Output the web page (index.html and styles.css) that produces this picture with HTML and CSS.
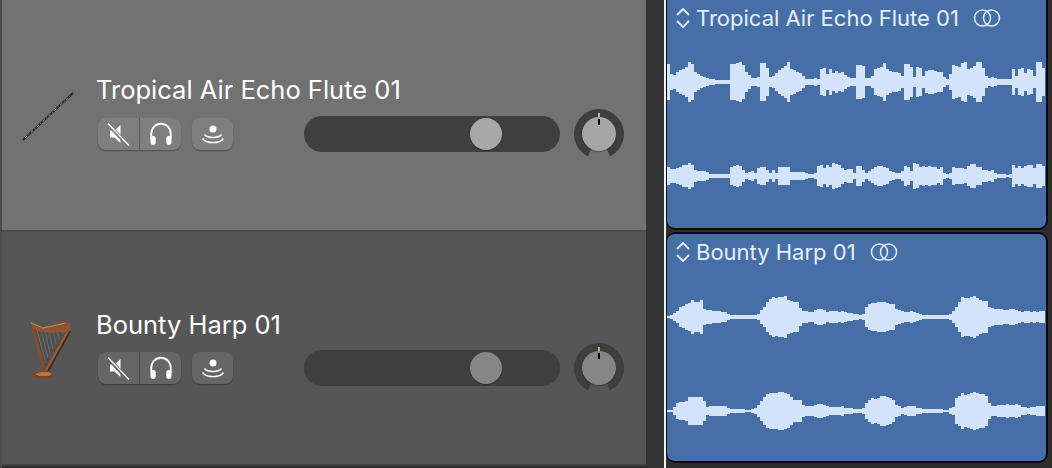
FILE: index.html
```html
<!DOCTYPE html>
<html lang="en">
<head>
<meta charset="utf-8">
<title>Tracks</title>
<link rel="stylesheet" href="styles.css">
</head>
<body>
<svg class="defs" width="0" height="0" aria-hidden="true">
  <symbol id="i-mute" viewBox="0 0 24 24">
    <path d="M3 8.500h4.500L13.500 3v18l-6-5.500H3z" fill="#fff"/>
    <path d="M1.500 2.500L21 23.500" stroke="currentColor" stroke-width="4" fill="none"/>
    <path d="M1 1.500L22 23.500" stroke="#fff" stroke-width="1.300" fill="none"/>
  </symbol>
  <symbol id="i-phones" viewBox="0 0 24 24">
    <path d="M2.300 16.500V11.500a9.700 9.700 0 0 1 19.400 0v5" fill="none" stroke="#fff" stroke-width="1.900"/>
    <rect x="1.500" y="14" width="5.200" height="9" rx="2.400" fill="#fff"/>
    <rect x="17.300" y="14" width="5.200" height="9" rx="2.400" fill="#fff"/>
  </symbol>
  <symbol id="i-cast" viewBox="0 0 24 24">
    <circle cx="12" cy="7" r="3.500" fill="#fff"/>
    <path d="M3.500 12.500c3 4 14 4 17 0M1.500 16.500c4 5.500 17 5.500 21 0" fill="none" stroke="#fff" stroke-width="1.400"/>
  </symbol>
  <symbol id="i-sort" viewBox="0 0 16 22">
    <path d="M2 8l6-6 6 6M2 14l6 6 6-6" fill="none" stroke="#e6eefb" stroke-width="1.800"/>
  </symbol>
  <symbol id="i-link" viewBox="0 0 28 18">
    <circle cx="9.500" cy="9" r="8" fill="none" stroke="#e6eefb" stroke-width="1.500"/>
    <circle cx="18.500" cy="9" r="8" fill="none" stroke="#e6eefb" stroke-width="1.500"/>
  </symbol>
  <symbol id="i-knob" viewBox="0 0 50 50">
    <path d="M14 47.500A25 25 0 1 1 36 47.500L32 38H18z" fill="#3e3e3e"/>
  </symbol>
</svg>

<main class="app">
  <section class="tracks">
    <article class="track track-a">
      <div class="instrument">
        <svg class="flute" viewBox="0 0 52 50" aria-hidden="true">
          <path d="M1 49L51 2" stroke="#2a2a2a" stroke-width="2.200" fill="none"/>
          <path d="M3 47L49 4" stroke="#b9b9b9" stroke-width=".8" stroke-dasharray="3 2 1 2" fill="none"/>
        </svg>
      </div>
      <div class="body">
        <h2 class="name">Tropical Air Echo Flute 01</h2>
        <div class="controls">
          <div class="btn-group">
            <button class="btn"><svg class="ico"><use href="#i-mute"/></svg></button>
            <button class="btn"><svg class="ico"><use href="#i-phones"/></svg></button>
          </div>
          <button class="btn btn-solo"><svg class="ico"><use href="#i-cast"/></svg></button>
          <div class="slider"><span class="thumb"></span></div>
          <div class="pan"><svg class="ring"><use href="#i-knob"/></svg><span class="led"></span><span class="cap"></span><span class="tick"></span></div>
        </div>
      </div>
    </article>
    <article class="track track-b">
      <div class="instrument">
        <svg class="harp" viewBox="0 0 42 60" aria-hidden="true">
          <path d="M3 8L15 51 38 11z" fill="#4e4e4e"/>
          <path d="M7 9l9 33M11 9l7 28M15 10l5 23M19 10l4 18M23 9l3 14M27 8l2 10M31 7l2 6" stroke="#7a7a7a" stroke-width=".7" fill="none"/>
          <path d="M40 10L17 52" stroke="#3a2a20" stroke-width="2" fill="none"/>
          <path d="M38 10L15 51" stroke="#9a5a32" stroke-width="2.400" fill="none"/>
          <path d="M2 3l13 48" stroke="#8a4c28" stroke-width="2.600" fill="none"/>
          <path d="M0 1l13 5 10-2 12-3 5 1 1 6-3 3-8 0-8 1-10-1-9-3z" fill="#8f5532"/>
          <path d="M1 2l12 5 10-2 12-3" stroke="#c08a5e" stroke-width="1" fill="none"/>
          <path d="M2 53l10-3h8l3 3-2 4H9l-6-1z" fill="#7a4020"/>
          <path d="M11 51h8l3 2-3 2H9l-4-2z" fill="#b87446"/>
        </svg>
      </div>
      <div class="body">
        <h2 class="name">Bounty Harp 01</h2>
        <div class="controls">
          <div class="btn-group">
            <button class="btn"><svg class="ico"><use href="#i-mute"/></svg></button>
            <button class="btn"><svg class="ico"><use href="#i-phones"/></svg></button>
          </div>
          <button class="btn btn-solo"><svg class="ico"><use href="#i-cast"/></svg></button>
          <div class="slider"><span class="thumb"></span></div>
          <div class="pan"><svg class="ring"><use href="#i-knob"/></svg><span class="led"></span><span class="cap"></span><span class="tick"></span></div>
        </div>
      </div>
    </article>
  </section>
  <div class="gutter"></div>
  <div class="rule"></div>
  <section class="clips">
    <article class="clip clip-a">
      <header class="clip-head">
        <svg class="sort"><use href="#i-sort"/></svg>
        <span class="clip-name">Tropical Air Echo Flute 01</span>
        <svg class="link"><use href="#i-link"/></svg>
      </header>
      <div class="waves">
        <svg class="wave" viewBox="-.5 -22 126 44" preserveAspectRatio="none" aria-hidden="true"><path d="M0-18V18M1-8V8M2-7V7M3-10V10M4-12V12M5-13V13M6-15V15M7-20V20M8-18V18M9-10V10M10-8V8M11-6V6M12-5V5M13-4V4M14-3V3M15-3V3M16-2V2M17-2V2M18-2V2M19-2V2M20-2V2M21-18V18M22-18V18M23-19V19M24-20V20M25-17V17M26-10V10M27-7V7M28-4V4M29-4V4M30-5V5M31-19V19M32-19V19M33-14V14M34-5V5M35-6V6M36-9V9M37-12V12M38-14V14M39-16V16M40-20V20M41-13V13M42-12V12M43-10V10M44-9V9M45-6V6M46-3V3M47-3V3M48-3V3M49-4V4M50-3V3M51-13V13M52-14V14M53-8V8M54-13V13M55-9V9M56-11V11M57-9V9M58-10V10M59-7V7M60-5V5M61-4V4M62-4V4M63-17V17M64-17V17M65-16V16M66-4V4M67-4V4M68-6V6M69-13V13M70-14V14M71-15V15M72-19V19M73-13V13M74-11V11M75-10V10M76-10V10M77-9V9M78-6V6M79-18V18M80-18V18M81-15V15M82-5V5M83-15V15M84-14V14M85-6V6M86-11V11M87-12V12M88-12V12M89-11V11M90-10V10M91-10V10M92-5V5M93-3V3M94-8V8M95-17V17M96-16V16M97-15V15M98-19V19M99-20V20M100-13V13M101-14V14M102-16V16M103-20V20M104-20V20M105-14V14M106-6V6M107-4V4M108-5V5M109-4V4M110-3V3M111-3V3M112-3V3M113-3V3M114-3V3M115-13V13M116-6V6M117-13V13M118-14V14M119-9V9M120-13V13M121-12V12M122-6V6M123-20V20M124-20V20M125-14V14"/></svg>
        <svg class="wave" viewBox="-.5 -22 126 44" preserveAspectRatio="none" aria-hidden="true"><path d="M0-9V9M1-7V7M2-7V7M3-8V8M4-9V9M5-11V11M6-11V11M7-13V13M8-11V11M9-6V6M10-5V5M11-5V5M12-5V5M13-4V4M14-2V2M15-2V2M16-2V2M17-2V2M18-2V2M19-2V2M20-2V2M21-9V9M22-10V10M23-11V11M24-10V10M25-6V6M26-3V3M27-4V4M28-5V5M29-3V3M30-8V8M31-9V9M32-9V9M33-6V6M34-3V3M35-6V6M36-3V3M37-9V9M38-9V9M39-9V9M40-9V9M41-4V4M42-4V4M43-4V4M44-4V4M45-4V4M46-3V3M47-2V2M48-2V2M49-3V3M50-10V10M51-11V11M52-8V8M53-11V11M54-9V9M55-13V13M56-12V12M57-11V11M58-8V8M59-6V6M60-7V7M61-7V7M62-3V3M63-10V10M64-10V10M65-6V6M66-3V3M67-5V5M68-7V7M69-9V9M70-10V10M71-10V10M72-9V9M73-8V8M74-5V5M75-4V4M76-3V3M77-3V3M78-5V5M79-10V10M80-9V9M81-5V5M82-13V13M83-12V12M84-9V9M85-10V10M86-9V9M87-10V10M88-9V9M89-9V9M90-7V7M91-9V9M92-3V3M93-2V2M94-3V3M95-9V9M96-8V8M97-8V8M98-8V8M99-7V7M100-10V10M101-12V12M102-12V12M103-9V9M104-9V9M105-6V6M106-6V6M107-5V5M108-6V6M109-3V3M110-2V2M111-2V2M112-2V2M113-1V1M114-2V2M115-11V11M116-8V8M117-10V10M118-8V8M119-10V10M120-11V11M121-11V11M122-8V8M123-12V12M124-12V12M125-10V10"/></svg>
      </div>
    </article>
    <article class="clip clip-b">
      <header class="clip-head">
        <svg class="sort"><use href="#i-sort"/></svg>
        <span class="clip-name">Bounty Harp 01</span>
        <svg class="link"><use href="#i-link"/></svg>
      </header>
      <div class="waves">
        <svg class="wave" viewBox="-.5 -22 126 44" preserveAspectRatio="none" aria-hidden="true"><path d="M0-1V1M1-2V2M2-4V4M3-6V6M4-10V10M5-11V11M6-13V13M7-14V14M8-17V17M9-15V15M10-15V15M11-17V17M12-8V8M13-7V7M14-7V7M15-6V6M16-6V6M17-6V6M18-5V5M19-5V5M20-3V3M21-2V2M22-2V2M23-2V2M24-2V2M25-2V2M26-2V2M27-2V2M28-2V2M29-2V2M30-3V3M31-7V7M32-10V10M33-15V15M34-18V18M35-20V20M36-19V19M37-20V20M38-20V20M39-21V21M40-17V17M41-16V16M42-15V15M43-15V15M44-9V9M45-6V6M46-6V6M47-5V5M48-5V5M49-7V7M50-8V8M51-8V8M52-7V7M53-5V5M54-6V6M55-6V6M56-6V6M57-5V5M58-6V6M59-5V5M60-4V4M61-4V4M62-3V3M63-3V3M64-2V2M65-3V3M66-10V10M67-13V13M68-14V14M69-14V14M70-15V15M71-15V15M72-15V15M73-14V14M74-13V13M75-13V13M76-8V8M77-7V7M78-6V6M79-5V5M80-5V5M81-6V6M82-5V5M83-4V4M84-3V3M85-2V2M86-2V2M87-2V2M88-2V2M89-2V2M90-2V2M91-2V2M92-2V2M93-2V2M94-3V3M95-6V6M96-10V10M97-15V15M98-20V20M99-19V19M100-19V19M101-20V20M102-21V21M103-19V19M104-17V17M105-16V16M106-16V16M107-10V10M108-9V9M109-8V8M110-8V8M111-8V8M112-7V7M113-7V7M114-8V8M115-8V8M116-7V7M117-6V6M118-5V5M119-6V6M120-6V6M121-5V5M122-6V6M123-5V5M124-6V6M125-6V6"/></svg>
        <svg class="wave" viewBox="-.5 -22 126 44" preserveAspectRatio="none" aria-hidden="true"><path d="M0-1V1M1-1V1M2-4V4M3-8V8M4-9V9M5-9V9M6-10V10M7-14V14M8-14V14M9-14V14M10-14V14M11-14V14M12-10V10M13-4V4M14-5V5M15-5V5M16-5V5M17-5V5M18-5V5M19-5V5M20-3V3M21-2V2M22-2V2M23-2V2M24-2V2M25-2V2M26-1V1M27-1V1M28-2V2M29-3V3M30-6V6M31-10V10M32-14V14M33-17V17M34-18V18M35-18V18M36-18V18M37-19V19M38-19V19M39-18V18M40-17V17M41-14V14M42-11V11M43-11V11M44-11V11M45-6V6M46-5V5M47-5V5M48-5V5M49-6V6M50-7V7M51-7V7M52-6V6M53-5V5M54-4V4M55-4V4M56-4V4M57-4V4M58-5V5M59-3V3M60-3V3M61-3V3M62-2V2M63-2V2M64-2V2M65-3V3M66-8V8M67-11V11M68-13V13M69-12V12M70-13V13M71-15V15M72-15V15M73-14V14M74-13V13M75-11V11M76-6V6M77-5V5M78-3V3M79-4V4M80-5V5M81-5V5M82-5V5M83-3V3M84-3V3M85-2V2M86-2V2M87-2V2M88-2V2M89-2V2M90-2V2M91-2V2M92-1V1M93-1V1M94-3V3M95-4V4M96-13V13M97-15V15M98-18V18M99-16V16M100-17V17M101-18V18M102-19V19M103-18V18M104-17V17M105-17V17M106-15V15M107-8V8M108-5V5M109-5V5M110-6V6M111-6V6M112-6V6M113-7V7M114-6V6M115-6V6M116-7V7M117-6V6M118-4V4M119-4V4M120-3V3M121-4V4M122-4V4M123-5V5M124-5V5M125-5V5"/></svg>
      </div>
    </article>
  </section>
</main>
</body>
</html>
```

FILE: styles.css
```css
* { box-sizing: border-box; margin: 0; padding: 0; }
html, body { width: 1052px; height: 468px; overflow: hidden; background: #2e2e2e; }
body { font-family: Inter, "Liberation Sans", sans-serif; color: #fff; }
.defs { display: block; height: 0; }

.app { display: flex; width: 1052px; height: 468px; }

.tracks { width: 646px; flex: none; display: flex; flex-direction: column; border-left: 2px solid #4a4a4a; }
.track { display: flex; flex: none; }
.track-a { height: 232px; padding-top: 76px; background: #727272; border-bottom: 2px solid #4b4b4b; }
.track-b { height: 234px; padding-top: 79px; background: #565656; border-bottom: 2px solid #424242; }

.instrument { width: 95px; flex: none; display: flex; justify-content: flex-start; align-items: flex-start; }
.flute { width: 52px; height: 50px; margin: 15px 0 0 20px; }
.harp { width: 42px; height: 60px; margin: 10px 0 0 28px; }

.body { flex: none; width: 530px; }
.name { font-size: 25.500px; line-height: 28px; font-weight: 400; color: #fff; margin: 0 0 5px -1px; }
.track-b .name { margin-bottom: 4px; }
.controls { display: flex; align-items: center; margin-left: 1px; }

.btn { width: 41px; height: 32px; border: 0; display: flex; align-items: center; justify-content: center; background: #7f7f7f; color: #7f7f7f; }
.btn-group { display: flex; gap: 1px; width: 83px; border-radius: 8px; overflow: hidden; background: #5c5c5c; box-shadow: 0 1px 1px rgba(0,0,0,.3); }
.btn-solo { width: 41px; margin-left: 11px; border-radius: 8px; box-shadow: 0 1px 1px rgba(0,0,0,.3); }
.track-b .btn { background: #666; color: #666; }
.track-b .btn-group { background: #484848; }
.ico { width: 24px; height: 24px; }

.slider { width: 256px; height: 36px; margin-left: 71px; border-radius: 18px; background: #3f3f3f; display: flex; align-items: center; padding-left: 166px; }
.thumb { width: 32px; height: 32px; border-radius: 50%; background: #a8a8a8; box-shadow: 0 1px 1px rgba(0,0,0,.3); }
.track-b .thumb { background: #868686; }

.pan { position: relative; width: 50px; height: 50px; margin-left: 14px; }
.ring { display: block; width: 50px; height: 50px; }
.cap { position: absolute; left: 8px; top: 8px; width: 34px; height: 34px; border-radius: 50%; background: #a6a6a6; box-shadow: 0 1px 1px rgba(0,0,0,.3); }
.track-b .cap { background: #868686; }
.led { position: absolute; left: 24px; top: 4px; width: 2px; height: 4px; background: #6fdc6f; }
.tick { position: absolute; left: 24px; top: 10px; width: 2px; height: 6px; background: #000; }

.gutter { width: 18px; flex: none; background: #333; }
.rule { width: 2px; flex: none; background: #f2f2f2; }

.clips { flex: none; width: 384px; display: flex; flex-direction: column; gap: 2px; padding-right: 2px; }
.clip { background: #466fa8; border: 2px solid #0a0a0a; border-left-width: 1px; border-radius: 0 0 9px 9px; overflow: hidden; }
.clip-a { height: 231px; margin-top: -1px; border-top: 0; }
.clip-b { height: 231px; border-radius: 9px; }

.clip-head { display: flex; align-items: center; height: 26px; padding-left: 8px; color: #e6eefb; }
.clip-a .clip-head { margin-top: 6px; }
.clip-b .clip-head { margin-top: 5px; }
.sort { width: 16px; height: 22px; flex: none; }
.clip-name { font-size: 22px; line-height: 26px; margin-left: 5px; white-space: nowrap; }
.link { width: 28px; height: 18px; flex: none; margin-left: 14px; }

.waves { display: flex; flex-direction: column; gap: 50px; }
.clip-a .waves { margin-top: 29px; }
.clip-b .waves { margin-top: 30px; }
.wave { display: block; width: 378px; height: 44px; }
.wave path { fill: none; stroke: #d3e3fa; stroke-width: 1; shape-rendering: crispEdges; }
```
